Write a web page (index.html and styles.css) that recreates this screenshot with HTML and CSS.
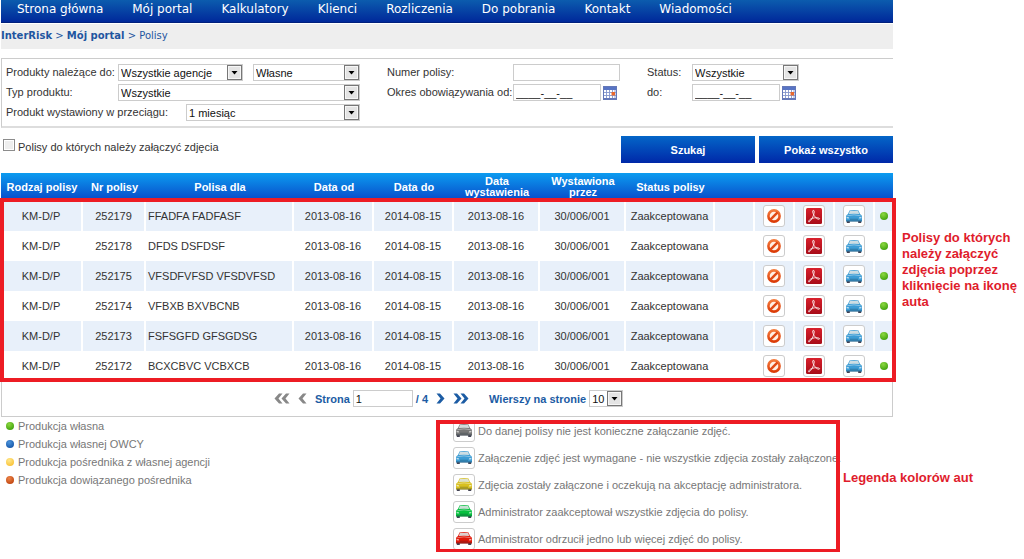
FILE: index.html
```html
<!DOCTYPE html>
<html lang="pl">
<head>
<meta charset="utf-8">
<title>InterRisk – Polisy</title>
<link rel="stylesheet" href="styles.css">
</head>
<body>
<svg class="sprite" aria-hidden="true">
  <defs>
    <linearGradient id="orange" x1="0" y1="0" x2="0" y2="1"><stop offset="0" stop-color="#f47a3c"/><stop offset="1" stop-color="#dc3c08"/></linearGradient>
    <linearGradient id="pdfred" x1="0" y1="0" x2="0" y2="1"><stop offset="0" stop-color="#d8202c"/><stop offset="1" stop-color="#a80c18"/></linearGradient>
  </defs>
  <symbol id="ban" viewBox="0 0 14 14">
    <circle cx="7" cy="7" r="5.600" fill="#fff0e4" stroke="url(#orange)" stroke-width="2.6"/>
    <path d="M3.400 10.600 10.600 3.400" stroke="#e04a14" stroke-width="2.4"/>
  </symbol>
  <symbol id="pdf" viewBox="0 0 16 16">
    <rect width="16" height="16" rx="1.500" fill="url(#pdfred)"/>
    <path d="M7 2.400C8.300 2 8.500 3.500 8 5.500 7.300 8.500 5.200 12.500 3.200 13.900 2.200 14.300 2.400 12.600 4.400 11.200 6.800 9.800 10.600 9.300 13 10.100 14.500 10.900 13 11.800 11.300 10.800 9.200 9.600 7 6.200 6.700 4 6.600 3 6.700 2.600 7 2.400Z" fill="none" stroke="#fff" stroke-opacity=".9" stroke-width=".9"/>
  </symbol>
  <symbol id="car" viewBox="0 0 18 15">
    <path d="M1.800 11.500h3v2.500h-3zM13.200 11.500h3v2.500h-3z" fill="#445"/>
    <path d="M4.500 1.500Q9 .5 13.500 1.500L15 5 16.600 6.200 17 8v4.500H1V8l.4-1.800L3 5z" fill="currentColor"/>
    <path d="M4.800 2.100Q9 1.200 13.200 2.100L14.200 5Q9 4.300 3.800 5z" fill="#dde4e4" fill-opacity=".9"/>
    <path d="M2.400 6.700Q9 5 15.600 6.700" fill="none" stroke="#fff" stroke-opacity=".4"/>
    <path d="M1.600 8l2.300.3v1.200l-2.300-.3zM16.400 8l-2.300.3v1.200l2.300-.3z" fill="#fff" fill-opacity=".7"/>
    <path d="M1.200 12h15.600" stroke="#123" stroke-opacity=".5"/>
    <path d="M5 9.700h8v1.200H5z" fill="#123" fill-opacity=".25"/>
  </symbol>
  <symbol id="calendar" viewBox="0 0 14 14">
    <rect x=".5" y=".5" width="13" height="13" fill="#fff" stroke="#6478b8"/>
    <path d="M1 1h12v3H1z" fill="#5874c4"/>
    <path d="M1 6.500h12M1 9.500h12M3.500 4v9M6.500 4v9M9.500 4v9M12 4v9" stroke="#8496cc" stroke-width=".9"/>
    <path d="M8.500 6h3.500v3.500H8.500z" fill="#e8682c"/>
    <path d="M1 12.500h12" stroke="#6478b8"/>
  </symbol>
  <symbol id="chevron" viewBox="0 0 9 11"><path d="M.5.500h3.500l4.500 5L4 10.500H.5l4-5z" fill="currentColor"/></symbol>
  <symbol id="chevrons" viewBox="0 0 16 11"><path d="M.5.500h3.500l4.500 5L4 10.500H.5l4-5zM7.500.500H11l4.500 5-4.500 5H7.500l4-5z" fill="currentColor"/></symbol>
</svg>

<div class="page">
  <main class="portal">
    <nav class="menu">
      <a href="#">Strona główna</a><a href="#">Mój portal</a><a href="#">Kalkulatory</a><a href="#">Klienci</a><a href="#">Rozliczenia</a><a href="#">Do pobrania</a><a href="#">Kontakt</a><a href="#">Wiadomości</a>
    </nav>
    <div class="crumbs"><a href="#"><b>InterRisk</b></a> &gt; <a href="#"><b>Mój portal</b></a> &gt; <a href="#">Polisy</a></div>

    <form class="search">
      <div class="filters">
        <div class="group group-product">
          <div class="line">
            <label class="name" for="agency">Produkty należące do:</label>
            <select id="agency" class="agency"><option>Wszystkie agencje</option></select>
            <select class="owner" aria-label="Właściciel"><option>Własne</option></select>
          </div>
          <div class="line">
            <label class="name" for="type">Typ produktu:</label>
            <select id="type" class="fill"><option>Wszystkie</option></select>
          </div>
          <div class="line">
            <label class="name-long" for="period">Produkt wystawiony w przeciągu:</label>
            <select id="period" class="fill"><option>1 miesiąc</option></select>
          </div>
        </div>
        <div class="group group-number">
          <div class="line">
            <label class="name-number" for="number">Numer polisy:</label>
            <input id="number" class="field" type="text">
          </div>
          <div class="line">
            <label class="name-number" for="from">Okres obowiązywania od:</label>
            <input id="from" class="date" type="text" value="____-__-__">
            <button class="pick" type="button" aria-label="Wybierz datę"><svg><use href="#calendar"/></svg></button>
          </div>
        </div>
        <div class="group">
          <div class="line">
            <label class="name-status" for="status">Status:</label>
            <select id="status" class="field"><option>Wszystkie</option></select>
          </div>
          <div class="line">
            <label class="name-status" for="to">do:</label>
            <input id="to" class="date" type="text" value="____-__-__">
            <button class="pick" type="button" aria-label="Wybierz datę"><svg><use href="#calendar"/></svg></button>
          </div>
        </div>
      </div>
      <div class="actions">
        <label class="check"><input type="checkbox"><span>Polisy do których należy załączyć zdjęcia</span></label>
        <button class="primary" type="button">Szukaj</button>
        <button class="primary" type="button">Pokaż wszystko</button>
      </div>
    </form>

    <div class="results">
      <table class="policies">
        <colgroup><col class="c82"><col class="c63"><col><col class="c80"><col class="c80"><col class="c86"><col class="c86"><col class="c89"><col class="c40"><col class="c40"><col class="c40"><col class="c40"><col class="c18"></colgroup>
        <thead>
          <tr><th>Rodzaj polisy</th><th>Nr polisy</th><th>Polisa dla</th><th>Data od</th><th>Data do</th><th>Data wystawienia</th><th>Wystawiona przez</th><th>Status polisy</th><th></th><th></th><th></th><th></th><th></th></tr>
        </thead>
        <tbody>
          <tr><td>KM-D/P</td><td>252179</td><td>FFADFA FADFASF</td><td>2013-08-16</td><td>2014-08-15</td><td>2013-08-16</td><td>30/006/001</td><td>Zaakceptowana</td><td></td><td><button class="tile" aria-label="Anuluj"><svg class="i-ban"><use href="#ban"/></svg></button></td><td><button class="tile" aria-label="PDF"><svg class="i-pdf"><use href="#pdf"/></svg></button></td><td><button class="tile blue" aria-label="Zdjęcia"><svg class="i-car"><use href="#car"/></svg></button></td><td><i class="dot green-dot"></i></td></tr>
          <tr><td>KM-D/P</td><td>252178</td><td>DFDS DSFDSF</td><td>2013-08-16</td><td>2014-08-15</td><td>2013-08-16</td><td>30/006/001</td><td>Zaakceptowana</td><td></td><td><button class="tile" aria-label="Anuluj"><svg class="i-ban"><use href="#ban"/></svg></button></td><td><button class="tile" aria-label="PDF"><svg class="i-pdf"><use href="#pdf"/></svg></button></td><td><button class="tile blue" aria-label="Zdjęcia"><svg class="i-car"><use href="#car"/></svg></button></td><td><i class="dot green-dot"></i></td></tr>
          <tr><td>KM-D/P</td><td>252175</td><td>VFSDFVFSD VFSDVFSD</td><td>2013-08-16</td><td>2014-08-15</td><td>2013-08-16</td><td>30/006/001</td><td>Zaakceptowana</td><td></td><td><button class="tile" aria-label="Anuluj"><svg class="i-ban"><use href="#ban"/></svg></button></td><td><button class="tile" aria-label="PDF"><svg class="i-pdf"><use href="#pdf"/></svg></button></td><td><button class="tile blue" aria-label="Zdjęcia"><svg class="i-car"><use href="#car"/></svg></button></td><td><i class="dot green-dot"></i></td></tr>
          <tr><td>KM-D/P</td><td>252174</td><td>VFBXB BXVBCNB</td><td>2013-08-16</td><td>2014-08-15</td><td>2013-08-16</td><td>30/006/001</td><td>Zaakceptowana</td><td></td><td><button class="tile" aria-label="Anuluj"><svg class="i-ban"><use href="#ban"/></svg></button></td><td><button class="tile" aria-label="PDF"><svg class="i-pdf"><use href="#pdf"/></svg></button></td><td><button class="tile blue" aria-label="Zdjęcia"><svg class="i-car"><use href="#car"/></svg></button></td><td><i class="dot green-dot"></i></td></tr>
          <tr><td>KM-D/P</td><td>252173</td><td>FSFSGFD GFSGDSG</td><td>2013-08-16</td><td>2014-08-15</td><td>2013-08-16</td><td>30/006/001</td><td>Zaakceptowana</td><td></td><td><button class="tile" aria-label="Anuluj"><svg class="i-ban"><use href="#ban"/></svg></button></td><td><button class="tile" aria-label="PDF"><svg class="i-pdf"><use href="#pdf"/></svg></button></td><td><button class="tile blue" aria-label="Zdjęcia"><svg class="i-car"><use href="#car"/></svg></button></td><td><i class="dot green-dot"></i></td></tr>
          <tr><td>KM-D/P</td><td>252172</td><td>BCXCBVC VCBXCB</td><td>2013-08-16</td><td>2014-08-15</td><td>2013-08-16</td><td>30/006/001</td><td>Zaakceptowana</td><td></td><td><button class="tile" aria-label="Anuluj"><svg class="i-ban"><use href="#ban"/></svg></button></td><td><button class="tile" aria-label="PDF"><svg class="i-pdf"><use href="#pdf"/></svg></button></td><td><button class="tile blue" aria-label="Zdjęcia"><svg class="i-car"><use href="#car"/></svg></button></td><td><i class="dot green-dot"></i></td></tr>
        </tbody>
      </table>
      <div class="frame frame-rows"></div>
    </div>

    <div class="pager">
      <button class="step off back" aria-label="Pierwsza"><svg class="double"><use href="#chevrons"/></svg></button>
      <button class="step off back" aria-label="Poprzednia"><svg class="single"><use href="#chevron"/></svg></button>
      <span class="pages"><label for="pageno">Strona</label><input id="pageno" type="text" value="1"><span>/ 4</span></span>
      <button class="step" aria-label="Następna"><svg class="single"><use href="#chevron"/></svg></button>
      <button class="step" aria-label="Ostatnia"><svg class="double"><use href="#chevrons"/></svg></button>
      <span class="pages per"><label for="rows">Wierszy na stronie</label><select id="rows"><option>10</option></select></span>
    </div>

    <div class="legends">
      <ul class="dots">
        <li><i class="dot green-dot"></i>Produkcja własna</li>
        <li><i class="dot blue-dot"></i>Produkcja własnej OWCY</li>
        <li><i class="dot yellow-dot"></i>Produkcja pośrednika z własnej agencji</li>
        <li><i class="dot orange-dot"></i>Produkcja dowiązanego pośrednika</li>
      </ul>
      <div class="car-legend">
        <ul class="cars">
          <li><span class="tile gray"><svg class="i-car"><use href="#car"/></svg></span>Do danej polisy nie jest konieczne załączanie zdjęć.</li>
          <li><span class="tile blue"><svg class="i-car"><use href="#car"/></svg></span>Załączenie zdjęć jest wymagane - nie wszystkie zdjęcia zostały załączone.</li>
          <li><span class="tile yellow"><svg class="i-car"><use href="#car"/></svg></span>Zdjęcia zostały załączone i oczekują na akceptację administratora.</li>
          <li><span class="tile green"><svg class="i-car"><use href="#car"/></svg></span>Administrator zaakceptował wszystkie zdjęcia do polisy.</li>
          <li><span class="tile red"><svg class="i-car"><use href="#car"/></svg></span>Administrator odrzucił jedno lub więcej zdjęć do polisy.</li>
        </ul>
        <div class="frame frame-cars"></div>
      </div>
      <p class="note note-cars">Legenda kolorów aut</p>
    </div>
  </main>
  <aside class="side">
    <p class="note">Polisy do których należy załączyć zdjęcia poprzez kliknięcie na ikonę auta</p>
  </aside>
</div>
</body>
</html>
```
FILE: styles.css
```css
* { box-sizing: border-box; }
body {
  margin: 0;
  background: #fff;
  color: #333;
  font: 11px/14px "Liberation Sans", Arial, sans-serif;
}
ul, p { margin: 0; padding: 0; list-style: none; }
a { color: inherit; text-decoration: none; }
button, input, select { font: inherit; margin: 0; }
svg { display: block; }
.sprite { position: absolute; width: 0; height: 0; }

.page { display: flex; }
.portal { flex: 1; min-width: 0; padding-left: 1px; }
.side { flex: none; width: 131px; padding: 230px 0 0 9px; }

.menu {
  display: flex;
  gap: 29px;
  height: 23px;
  padding: 2px 16px 0;
  background: linear-gradient(#0c5cae, #00289a);
  border-bottom: 1px solid #00207c;
  color: #fff;
  font: 12px/15px "DejaVu Sans", Verdana, sans-serif;
  white-space: nowrap;
}
.crumbs {
  height: 25px;
  margin: 1px 0 9px;
  background: #eee;
  color: #1f56a0;
  font: 10px/24px "DejaVu Sans", Verdana, sans-serif;
}

.filters {
  display: flex;
  padding: 5px 4px;
  border: solid #ccc;
  border-width: 1px 0 2px 1px;
  border-bottom-color: #ddd;
}
.group { display: flex; flex-direction: column; gap: 3px; }
.group-product { width: 354px; margin-right: 27px; }
.group-number { margin-right: 27px; }
.line { display: flex; height: 17px; line-height: 17px; white-space: nowrap; }
.name { width: 112px; }
.name-long { width: 180px; }
.name-number { width: 126px; }
.name-status { width: 45px; }

select, input[type="text"] {
  height: 17px;
  padding: 0 2px;
  border: 1px solid #ccc;
  border-radius: 0;
  background-color: #fff;
  color: #111;
  line-height: 14px;
}
select {
  appearance: none;
  background: url("data:image/svg+xml,%3Csvg xmlns='http://www.w3.org/2000/svg' width='15' height='15'%3E%3Crect x='.5' y='.5' width='14' height='14' fill='%23e4e4e4' stroke='%23777'/%3E%3Crect x='1.500' y='1.500' width='12' height='12' fill='none' stroke='%23f6f6f6'/%3E%3Cpath d='M4.500 6h6L7.500 9.500z'/%3E%3C/svg%3E") right center no-repeat #fff;
}
.agency { width: 125px; margin-right: 10px; }
.owner, .fill { flex: 1; }
.field { width: 107px; }
.date { width: 88px; }
.pick { width: 14px; height: 14px; margin: 2px 0 0 2px; padding: 0; border: 0; background: none; }
.pick svg { width: 14px; height: 14px; }

.actions { display: flex; gap: 4px; margin: 8px 0 10px; }
.check { display: flex; flex: 1; gap: 3px; padding: 3px 2px; line-height: 16px; }
.check input {
  appearance: none;
  width: 12px;
  height: 12px;
  border: 1px solid #8c8c8c;
  background: #eee;
  box-shadow: inset 0 0 0 1px #fff;
}
.primary {
  width: 134px;
  height: 27px;
  padding: 0;
  border: 0;
  background: linear-gradient(#0466c8, #0028a8);
  color: #fff;
  font-weight: bold;
}

.results { position: relative; }
.policies { width: 100%; table-layout: fixed; border-collapse: separate; border-spacing: 0; }
.c82 { width: 82px; }
.c63 { width: 63px; }
.c80 { width: 80px; }
.c86 { width: 86px; }
.c89 { width: 89px; }
.c40 { width: 40px; }
.c18 { width: 18px; }
.policies thead { background: linear-gradient(#0c9cf0, #0848c8); }
.policies th { height: 28px; padding: 0; color: #fff; line-height: 11px; }
.policies td { height: 30px; padding: 0; text-align: center; border-right: 2px solid #fff; }
.policies td:last-child { border-right: 0; }
.policies tbody tr:nth-child(odd) { background: #e8f0fa; }
.policies td:nth-child(3) { padding-left: 2px; text-align: left; }

.tile {
  display: flex;
  flex: none;
  align-items: center;
  justify-content: center;
  width: 22px;
  height: 22px;
  margin: 0 auto;
  padding: 0;
  border: 1px solid #ccc;
  border-radius: 3px;
  background: #fff;
}
.i-ban { width: 14px; height: 14px; }
.i-pdf { width: 16px; height: 16px; }
.i-car { width: 18px; height: 15px; }
.blue { color: #3c9cd4; }
.gray { color: #777; }
.yellow { color: #d8c020; }
.green { color: #08c040; }
.red { color: #e01808; }

.dot { display: inline-block; width: 8px; height: 8px; border-radius: 50%; }
.green-dot { background: radial-gradient(circle at 40% 30%, #8cd840, #2c9400); }
.blue-dot { background: radial-gradient(circle at 40% 30%, #4c94dc, #08489c); }
.yellow-dot { background: radial-gradient(circle at 40% 30%, #ffe88c, #f8b820); }
.orange-dot { background: radial-gradient(circle at 40% 30%, #ec8448, #b43400); }

.frame { position: absolute; border: 4px solid #ed1c24; pointer-events: none; }
.frame-rows { inset: 25px -3px -1px -1px; }
.frame-cars { inset: 3px 0 -1px 0; }

.pager {
  display: flex;
  align-items: center;
  gap: 8px;
  height: 36px;
  padding-left: 272px;
  border: solid #ccc;
  border-width: 0 1px 1px;
  color: #1c5ca4;
  font-weight: bold;
}
.step { padding: 0; border: 0; background: none; color: #1c5ca4; }
.off { color: #888; }
.back svg { transform: scaleX(-1); }
.double { width: 16px; height: 11px; }
.single { width: 9px; height: 11px; }
.pages { display: flex; align-items: center; gap: 3px; white-space: nowrap; }
.pages input, .pages select { font-weight: normal; }
.pages input { width: 60px; }
.pages select { width: 34px; }
.per { margin-left: 12px; }

.legends { display: flex; align-items: flex-start; color: #777; white-space: nowrap; }
.dots { width: 435px; padding-left: 5px; }
.dots li { display: flex; align-items: center; gap: 4px; height: 18px; }
.car-legend { position: relative; width: 404px; padding-left: 17px; }
.cars li { display: flex; align-items: center; gap: 3px; height: 27px; }
.cars .tile { margin: 0; }
.note { color: #e01c2c; font: bold 13px/16px "Liberation Sans", Arial, sans-serif; }
.note-cars { width: 0; padding: 53px 0 0 3px; }
```
